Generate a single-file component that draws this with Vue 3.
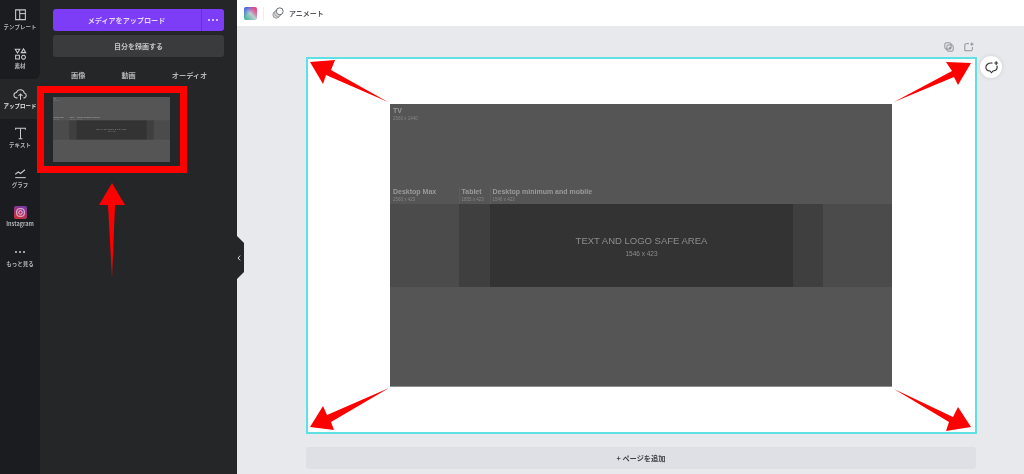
<script setup>
const rail = [
  { name: "テンプレート", paths: ["M3.5 2.5h13v13h-13z", "M9 2.5v13", "M9 7.5h7.5"] },
  { name: "素材", paths: ["M3 3h6l-3 5z", "M14 2.5l3 5h-6z", "M3.5 11h5v5h-5z", "M14 11a2.6 2.6 0 1 0 .01 0z"] },
  { name: "アップロード", active: true, paths: ["M6 14.5H5a3.6 3.6 0 0 1-.4-7.2 5.4 5.4 0 0 1 10.4.6 3.4 3.4 0 0 1 .2 6.6H14", "M10 17V9.5", "M7.3 12L10 9.3l2.7 2.7"] },
  { name: "テキスト", paths: ["M3.5 5V3h13v2", "M10 3v14", "M7.5 17h5"] },
  { name: "グラフ", paths: ["M3 11l4-3 3 2 6-5", "M3 15.5h14"] },
  { name: "Instagram", instagram: true },
  { name: "もっと見る", dots: true },
];

const tabs = ["画像", "動画", "オーディオ"];

const arrows = [
  "310,62 335,60 331,70 388,102 326,75 323,84",
  "971,63 946,62 952,71 894,102 954,77 958,85",
  "310,427 323,406 327,415 389,388 331,422 334,430",
  "971,427 958,407 953,417 894,389 949,422 946,431",
  "112,183 99,205 108,205 112,278 115,205 125,205",
];
</script>

<template>
  <div class="app">
    <nav class="rail">
      <div
        v-for="(item, i) in rail"
        :key="item.name"
        class="rail-item"
        :class="{ active: item.active, 'before-active': rail[i + 1] && rail[i + 1].active }"
      >
        <span v-if="item.instagram" class="insta">
          <svg width="9" height="9" viewBox="0 0 12 12" fill="none" stroke="#f3d9e4" stroke-width="1.2">
            <rect x="1" y="1" width="10" height="10" rx="3" />
            <circle cx="6" cy="6" r="2.4" />
          </svg>
        </span>
        <span v-else-if="item.dots" class="rail-dots"><i></i><i></i><i></i></span>
        <svg v-else class="rail-icon" width="15" height="15" viewBox="0 0 20 20" fill="none" stroke="#c9cacc" stroke-width="1.4">
          <path v-for="d in item.paths" :key="d" :d="d" />
        </svg>
        <span class="rail-label">{{ item.name }}</span>
      </div>
      <div class="rail-rest"></div>
    </nav>

    <aside class="panel">
      <div class="upload-btn">
        <span class="upload-text">メディアをアップロード</span>
        <span class="upload-more"><i></i><i></i><i></i></span>
      </div>
      <div class="record-btn">自分を録画する</div>
      <div class="tabs">
        <span v-for="t in tabs" :key="t">{{ t }}</span>
      </div>
      <div class="thumb">
        <div class="banner banner-small">
          <div class="banner-top">
            <b>TV</b>
            <small>2560 x 1440</small>
          </div>
          <div class="banner-labels">
            <div><b>Desktop Max</b><small>2560 x 423</small></div>
            <div class="sep"><b>Tablet</b><small>1855 x 423</small></div>
            <div class="sep"><b>Desktop minimum and mobile</b><small>1546 x 423</small></div>
          </div>
          <div class="band">
            <div class="band-a"></div>
            <div class="band-b"></div>
            <div class="band-c">
              <p>TEXT AND LOGO SAFE AREA</p>
              <small>1546 x 423</small>
            </div>
            <div class="band-b"></div>
            <div class="band-a"></div>
          </div>
        </div>
      </div>
    </aside>

    <main class="main">
      <header class="topbar">
        <span class="logo"></span>
        <span class="topbar-sep"></span>
        <svg width="12" height="12" viewBox="0 0 14 14" fill="none" stroke="#8b8d90" stroke-width="1">
          <circle cx="5" cy="9" r="4" fill="#d8d9db" />
          <circle cx="7" cy="7" r="4" fill="#e6e7e9" />
          <circle cx="9" cy="5" r="4" fill="#fff" stroke="#55575a" />
        </svg>
        <span class="topbar-text">アニメート</span>
      </header>

      <div class="stage">
        <div class="page-actions">
          <svg width="10" height="10" viewBox="0 0 12 12" fill="none" stroke="#7d8187" stroke-width="1">
            <rect x="1" y="1" width="7.5" height="7.5" rx="1.5" />
            <rect x="3.5" y="3.5" width="7.5" height="7.5" rx="1.5" />
            <path d="M7.2 5.8v2.8M5.8 7.2h2.8" />
          </svg>
          <svg width="10" height="10" viewBox="0 0 12 12" fill="none" stroke="#7d8187" stroke-width="1">
            <path d="M6 2H2.5A1.5 1.5 0 0 0 1 3.5v7h7.5A1.5 1.5 0 0 0 10 9V6" />
            <path d="M9.5 0.5v4M7.5 2.5h4" />
          </svg>
        </div>
        <section class="page">
          <div class="banner">
            <div class="banner-top">
              <b>TV</b>
              <small>2560 x 1440</small>
            </div>
            <div class="banner-labels">
              <div><b>Desktop Max</b><small>2560 x 423</small></div>
              <div class="sep"><b>Tablet</b><small>1855 x 423</small></div>
              <div class="sep"><b>Desktop minimum and mobile</b><small>1546 x 423</small></div>
            </div>
            <div class="band">
              <div class="band-a"></div>
              <div class="band-b"></div>
              <div class="band-c">
                <p>TEXT AND LOGO SAFE AREA</p>
                <small>1546 x 423</small>
              </div>
              <div class="band-b"></div>
              <div class="band-a"></div>
            </div>
          </div>
          <button class="comment">
            <svg width="15" height="15" viewBox="0 0 16 16" fill="none" stroke="#2f3136" stroke-width="1.2">
              <path d="M9 3.3C5 2.7 2 4.8 2 7.6c0 2.2 1.9 3.8 4.4 4.1L8 13.6l1.6-1.9c2.5-.4 4.4-2 4.4-4.1 0-.6-.1-1.1-.4-1.6" />
              <path d="M13 1.2v4M11 3.2h4" />
            </svg>
          </button>
        </section>
        <div class="add-page">+ ページを追加</div>
      </div>
    </main>

    <div class="handle">
      <svg width="4" height="6" viewBox="0 0 4 6" fill="none" stroke="#d5d6d8" stroke-width="1">
        <path d="M3.2 .6L1 3l2.2 2.4" />
      </svg>
    </div>

    <div class="red-box"></div>
    <svg class="arrows" width="1024" height="474" viewBox="0 0 1024 474">
      <polygon v-for="p in arrows" :key="p" :points="p" fill="#ff0000" />
    </svg>
  </div>
</template>

<style>
html,
body {
  margin: 0;
  background: #e8e9ed;
}
</style>

<style scoped>
.app {
  position: relative;
  display: flex;
  width: 1024px;
  height: 474px;
  overflow: hidden;
  font-family: "Noto Sans CJK JP", "Noto Sans", sans-serif;
  filter: blur(0.4px);
}

.rail {
  display: flex;
  flex-direction: column;
  width: 40px;
  flex: none;
  background: #252627;
}

.rail-item {
  display: flex;
  flex-direction: column;
  align-items: center;
  justify-content: flex-end;
  height: 39.5px;
  padding-bottom: 9px;
  box-sizing: border-box;
  flex: none;
  background: #1a1c20;
  color: #b4b6ba;
}

.rail-item.active {
  background: #252627;
  color: #e4e5e6;
}

.rail-item.before-active {
  border-bottom-right-radius: 6px;
}

.rail-item.active + .rail-item {
  border-top-right-radius: 6px;
}

.rail-rest {
  flex: 1;
  background: #1a1c20;
}

.rail-label {
  font-size: 5.5px;
  line-height: 8px;
  font-weight: 700;
  white-space: nowrap;
}

.insta {
  display: flex;
  align-items: center;
  justify-content: center;
  width: 13px;
  height: 13px;
  margin-bottom: 1px;
  border-radius: 2px;
  background: linear-gradient(20deg, #c9352f, #a22f7a 55%, #6a3fb0);
}

.rail-dots {
  display: flex;
  gap: 2px;
  height: 8px;
  margin-bottom: 4px;
  align-items: center;
}

.rail-dots i,
.upload-more i {
  width: 2px;
  height: 2px;
  border-radius: 50%;
  background: #c9cacc;
}

.panel {
  width: 197px;
  flex: none;
  box-sizing: border-box;
  padding: 9px 13px;
  background: #252627;
}

.upload-btn {
  display: flex;
  height: 22px;
  border-radius: 3px;
  background: #7d3cf5;
  color: #e3d6fa;
  font-size: 7.1px;
  font-weight: 700;
  line-height: 22px;
}

.upload-text {
  flex: 1;
  text-align: center;
}

.upload-more {
  display: flex;
  align-items: center;
  justify-content: center;
  gap: 2px;
  width: 22px;
  border-left: 1px solid #6a2fd6;
  margin-left: 1px;
}

.upload-more i {
  background: #f0e8ff;
}

.record-btn {
  height: 22px;
  margin-top: 4px;
  border-radius: 3px;
  background: #3a3b3d;
  color: #c4c5c6;
  font-size: 7px;
  font-weight: 700;
  line-height: 22px;
  text-align: center;
}

.tabs {
  display: flex;
  gap: 36px;
  height: 12px;
  margin-top: 12px;
  padding-left: 18px;
  color: #b4b5b7;
  font-size: 7.2px;
  font-weight: 700;
  line-height: 12px;
}

.thumb {
  width: 117px;
  height: 65px;
  margin-top: 16px;
  overflow: hidden;
}

.banner {
  display: flex;
  flex-direction: column;
  width: 502px;
  height: 282px;
  flex: none;
  background: #555;
  color: #9b9b9b;
  font-family: "Liberation Sans", Arial, sans-serif;
  box-shadow: 0 1px 0 #8e8e8e;
}

.banner-small {
  transform: scale(0.233);
  transform-origin: 0 0;
  box-shadow: none;
}

.banner b {
  display: block;
  font-size: 7px;
  line-height: 9px;
  white-space: nowrap;
}

.banner small {
  display: block;
  font-size: 4.5px;
  line-height: 7px;
  white-space: nowrap;
  color: #868686;
}

.banner-top {
  height: 81px;
  padding: 2px 3px 0;
}

.banner-labels {
  display: grid;
  grid-template-columns: 69px 31px 1fr;
  height: 17px;
}

.banner-labels > div {
  padding-left: 3px;
}

.banner-labels .sep {
  box-shadow: inset 1px 0 0 #5d5d5d;
  padding-left: 2.5px;
}

.band {
  display: grid;
  grid-template-columns: 69px 31px 303px 30px 69px;
  height: 83px;
}

.band-a {
  background: #4b4b4b;
}

.band-b {
  background: #3f3f3f;
}

.band-c {
  display: flex;
  flex-direction: column;
  align-items: center;
  justify-content: center;
  background: #333;
  box-sizing: border-box;
  padding-top: 2px;
}

.band-c p {
  margin: 0;
  color: #8d8d8d;
  font-size: 9.5px;
  line-height: 13px;
}

.band-c small {
  font-size: 6.5px;
  line-height: 13px;
  color: #8d8d8d;
}

.main {
  display: flex;
  flex-direction: column;
  flex: 1;
  background: #e8e9ed;
  min-width: 0;
}

.topbar {
  display: flex;
  align-items: center;
  height: 26px;
  flex: none;
  padding-left: 7px;
  background: #fff;
}

.logo {
  width: 13px;
  height: 13px;
  border-radius: 2px;
  background:
    linear-gradient(135deg, #2f4de6 0%, rgba(47, 77, 230, 0) 45%),
    linear-gradient(225deg, #f23c5e 0%, rgba(242, 60, 94, 0) 50%),
    linear-gradient(45deg, #2fae8f 0%, #b9cfd0 50%, #c45ae6 100%);
}

.topbar-sep {
  width: 1px;
  height: 13px;
  margin: 0 8px 0 6px;
  background: #eceded;
}

.topbar-text {
  margin-left: 5px;
  color: #55575a;
  font-size: 7px;
  font-weight: 700;
}

.stage {
  display: flex;
  flex-direction: column;
  padding: 0 47px 0 69px;
}

.page-actions {
  display: flex;
  justify-content: flex-end;
  align-items: center;
  gap: 10px;
  height: 31px;
  padding: 10px 3px 0 0;
  box-sizing: border-box;
}

.page {
  position: relative;
  width: 671px;
  height: 377px;
  box-sizing: border-box;
  padding: 45px 83px 46px 82px;
  border: 2px solid #5fe0e4;
  background: #fff;
}

.comment {
  position: absolute;
  top: -3px;
  left: 672px;
  display: flex;
  align-items: center;
  justify-content: center;
  width: 22px;
  height: 22px;
  padding: 0;
  border: 0;
  border-radius: 50%;
  background: #fff;
  box-shadow: 0 0 4px rgba(0, 0, 0, 0.12);
}

.add-page {
  width: 670px;
  height: 22px;
  margin-top: 13px;
  border-radius: 3px;
  background: #dfe0e5;
  color: #3f4146;
  font-size: 7.2px;
  font-weight: 700;
  line-height: 22px;
  text-align: center;
}

.handle {
  position: absolute;
  top: 236px;
  left: 237px;
  display: flex;
  align-items: center;
  justify-content: flex-start;
  width: 7px;
  height: 43px;
  background: #252627;
  clip-path: polygon(0 0, 100% 7px, 100% 36px, 0 100%);
}

.red-box {
  position: absolute;
  top: 86px;
  left: 37px;
  width: 150px;
  height: 87px;
  box-sizing: border-box;
  border: 7px solid #ff0000;
}

.arrows {
  position: absolute;
  top: 0;
  left: 0;
  pointer-events: none;
}
</style>
